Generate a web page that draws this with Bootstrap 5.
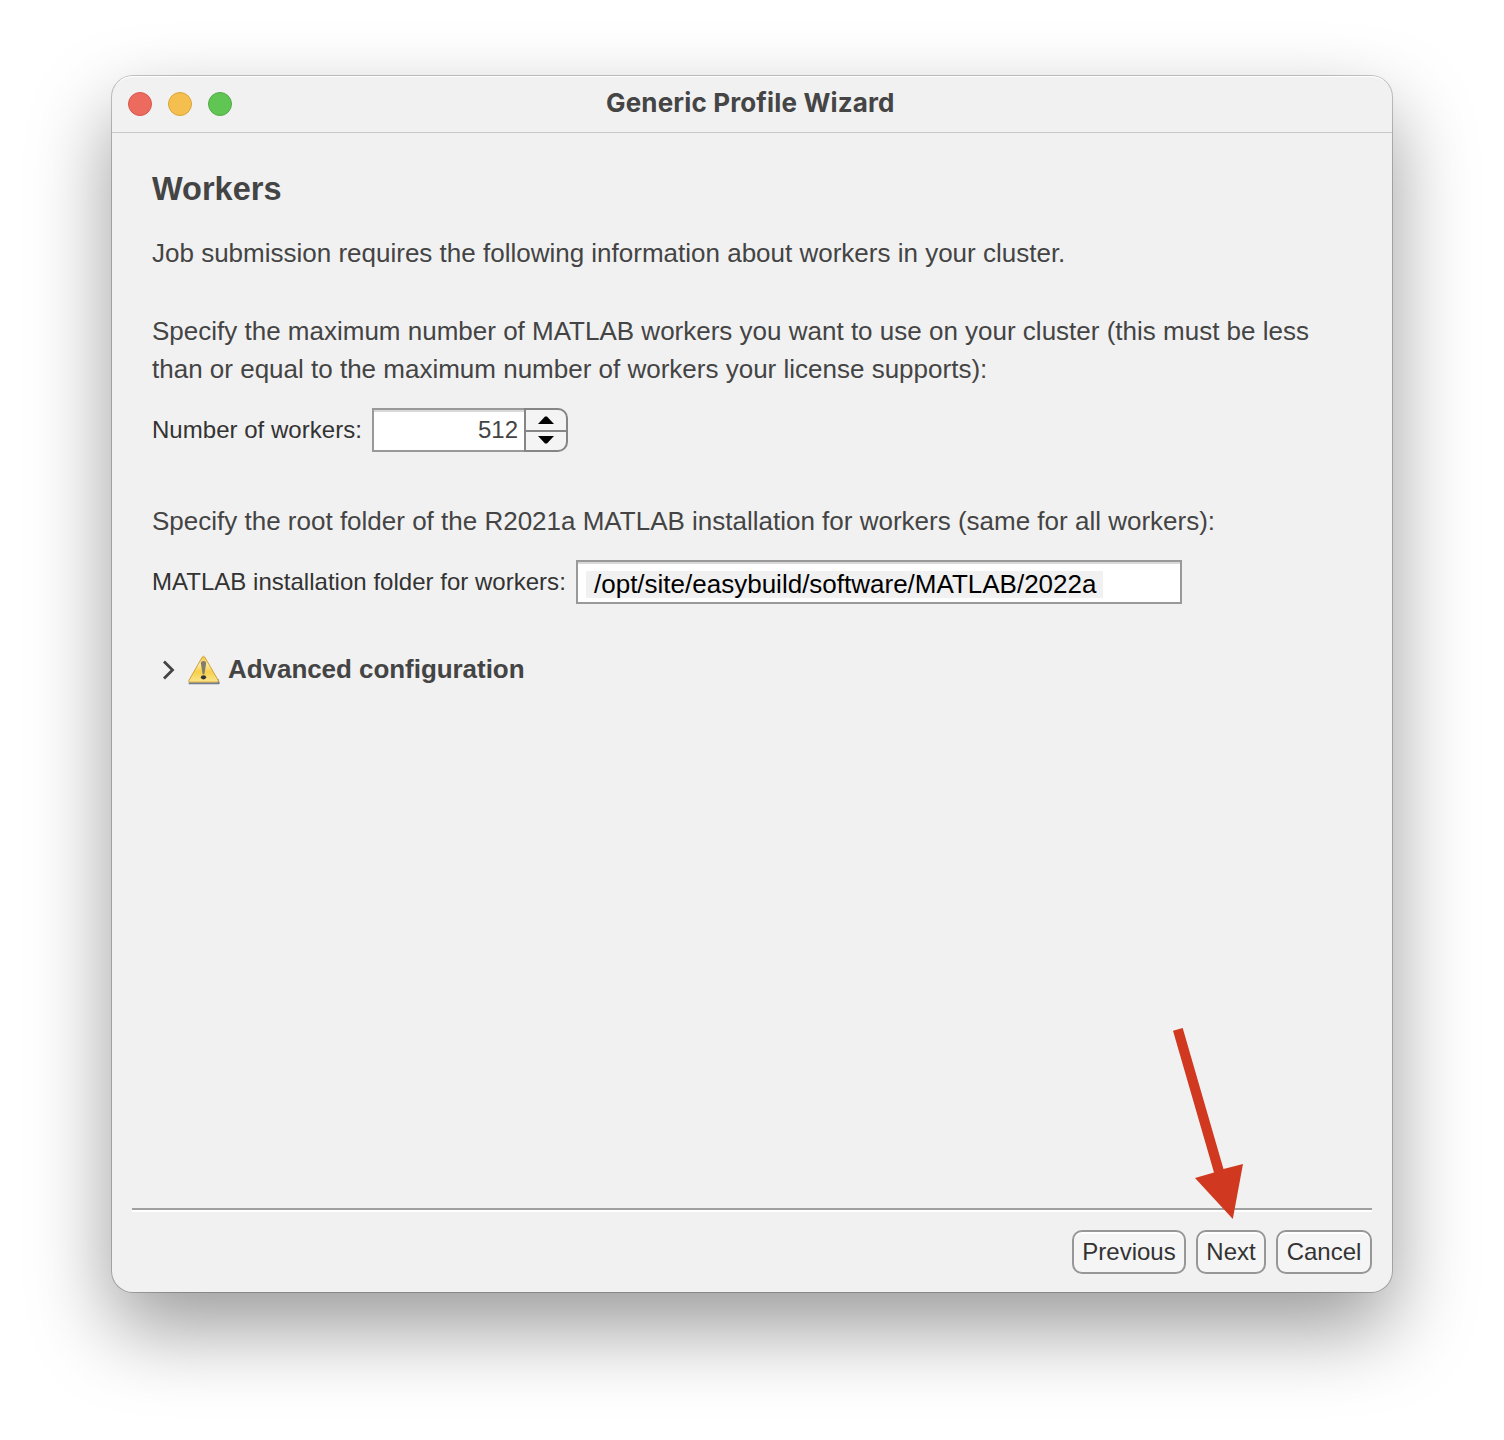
<!DOCTYPE html>
<html lang="en">
<head>
<meta charset="utf-8">
<meta name="viewport" content="width=device-width, initial-scale=1">
<title>Generic Profile Wizard</title>
<link href="https://cdn.jsdelivr.net/npm/bootstrap@5.3.0/dist/css/bootstrap.min.css" rel="stylesheet">
<style>
body{background:#fff;font-family:"Liberation Sans",Arial,sans-serif;color:#444;padding:76px 112px 0;height:1440px;overflow:hidden}
.wizard{width:1280px;height:1216px;background:#f1f1f1;border-radius:21px;box-shadow:0 0 0 1px rgba(0,0,0,.22),inset 0 2px 0 -1px #fff,0 36px 82px rgba(0,0,0,.4)}
.titlebar{height:57px;border-bottom:1px solid #c9c9c9;padding-left:16px}
.dot{width:24px;height:24px;border-radius:50%;border:1px solid}
.dot-close{background:#ec6a5e;border-color:#d9564a}
.dot-min{background:#f5bf4f;border-color:#dba53c}
.dot-max{background:#61c554;border-color:#52ac45}
.window-title{font:700 26px/30px Inter,sans-serif;color:#454545;left:494px;top:12px;white-space:nowrap;letter-spacing:.15px}
.wizard-body{padding:36px 40px 0}
h1{font-size:32.5px;line-height:40px;font-weight:700;margin:0 0 25px}
.copy{font-size:26px;line-height:38px;white-space:nowrap;margin:0}
.copy-limit{margin-top:40px}
.copy-root{margin-top:50px}
.field-row{margin-top:20px}
.field-label{font-size:24px;line-height:44px;color:#333;white-space:nowrap}
.label-count{width:220px;letter-spacing:.03px}
.label-folder{width:424px;letter-spacing:.02px}
.entry{height:44px;border:2px solid #999;background:#fff;box-shadow:inset 0 2px 0 #d9d9d9}
.count{width:152px;border-right:0;font-size:24px;line-height:40px;padding-right:6px}
.stepper{width:44px;height:44px;border:2px solid #858585;border-radius:0 10px 10px 0;background:#f4f4f4}
.stepper-btn{height:20px;border:0;padding:0;background:none}
.stepper-btn+.stepper-btn{border-top:2px solid #858585}
.folder{width:606px;padding:9px 0 0 8px}
.folder-path{background:#f1f1f1;color:#000;font-size:26px;line-height:27px;height:27px;width:517px;padding-left:8px;white-space:nowrap}
.advanced{margin-top:47px;height:38px;padding-left:10px}
.advanced .copy{letter-spacing:-.05px;margin-top:-2px}
.warning-icon{margin-left:12px;margin-right:8px}
.wizard-footer{margin:0 20px;height:84px;border-top:2px solid #a0a0a0;box-shadow:inset 0 2px 0 #fff;padding-top:20px;gap:10px}
.btn-wiz{height:44px;border:2px solid #979797;border-radius:10px;background:#f5f5f5;box-shadow:inset 0 2px 0 #fff;font-size:24px;line-height:40px;padding:0;color:#333}
.btn-previous{width:114px}
.btn-next{width:70px}
.btn-cancel{width:96px}
.pointer{left:1055px;top:945px;pointer-events:none}
</style>
</head>
<body>
<main class="wizard d-flex flex-column position-relative">
  <header class="titlebar d-flex align-items-center gap-3 position-relative flex-shrink-0">
    <span class="dot dot-close"></span><span class="dot dot-min"></span><span class="dot dot-max"></span>
    <div class="window-title position-absolute">Generic Profile Wizard</div>
  </header>
  <section class="wizard-body flex-grow-1">
    <h1>Workers</h1>
    <p class="copy">Job submission requires the following information about workers in your cluster.</p>
    <p class="copy copy-limit">Specify the maximum number of MATLAB workers you want to use on your cluster (this must be less<br>than or equal to the maximum number of workers your license supports):</p>
    <div class="field-row d-flex">
      <label class="field-label label-count">Number of workers:</label>
      <div class="entry count text-end">512</div>
      <div class="stepper d-flex flex-column">
        <button class="stepper-btn d-flex justify-content-center" aria-label="Increase"><svg width="16" height="20"><path d="M0 14 7 6.5h2l7 7.5z"/></svg></button>
        <button class="stepper-btn d-flex justify-content-center" aria-label="Decrease"><svg width="16" height="18"><path d="M0 4h16l-7 7.5H7z"/></svg></button>
      </div>
    </div>
    <p class="copy copy-root">Specify the root folder of the R2021a MATLAB installation for workers (same for all workers):</p>
    <div class="field-row d-flex">
      <label class="field-label label-folder">MATLAB installation folder for workers:</label>
      <div class="entry folder"><div class="folder-path">/opt/site/easybuild/software/MATLAB/2022a</div></div>
    </div>
    <div class="advanced d-flex align-items-center">
      <svg width="14" height="22" fill="none" stroke="#444" stroke-width="2.8"><path d="M2 2.5 10.5 11 2 19.5"/></svg>
      <svg class="warning-icon" width="32" height="30" viewBox="0 0 32 30">
        <defs><linearGradient id="amber" x1="0" y1="0" x2="0" y2="1"><stop stop-color="#f2be38"/><stop offset=".3" stop-color="#fdeba5"/><stop offset=".6" stop-color="#f7d04a"/><stop offset="1" stop-color="#fae590"/></linearGradient></defs>
        <path d="M1.5 28.2h29.2L29.8 25" fill="none" stroke="#6f7d92" stroke-width="2" stroke-linecap="round" stroke-linejoin="round"/>
        <path d="M14.2 2.2q1.3-2 2.6 0l13.4 23.2q.8 1.7-1 1.7H1.9q-1.8 0-1-1.7z" fill="url(#amber)" stroke="#cfa136"/>
        <path d="M12.9 8.5q0-2.4 2.6-2.4t2.6 2.4l-1.7 10.8h-1.8z" fill="#837d69"/><ellipse cx="15.5" cy="22.3" rx="2.6" ry="2.1" fill="#333"/>
      </svg>
      <strong class="copy">Advanced configuration</strong>
    </div>
  </section>
  <footer class="wizard-footer d-flex justify-content-end align-items-start flex-shrink-0">
    <button class="btn btn-wiz btn-previous">Previous</button>
    <button class="btn btn-wiz btn-next">Next</button>
    <button class="btn btn-wiz btn-cancel">Cancel</button>
  </footer>
  <svg class="pointer position-absolute" width="90" height="205" viewBox="1167 1021 90 205"><path fill="#d03920" d="M1173 1030.7 1182.7 1028 1223.5 1169 1243 1164 1232.8 1219 1195 1178 1214 1172.5z"/></svg>
</main>
<script src="https://cdn.jsdelivr.net/npm/bootstrap@5.3.0/dist/js/bootstrap.bundle.min.js"></script>
</body>
</html>
